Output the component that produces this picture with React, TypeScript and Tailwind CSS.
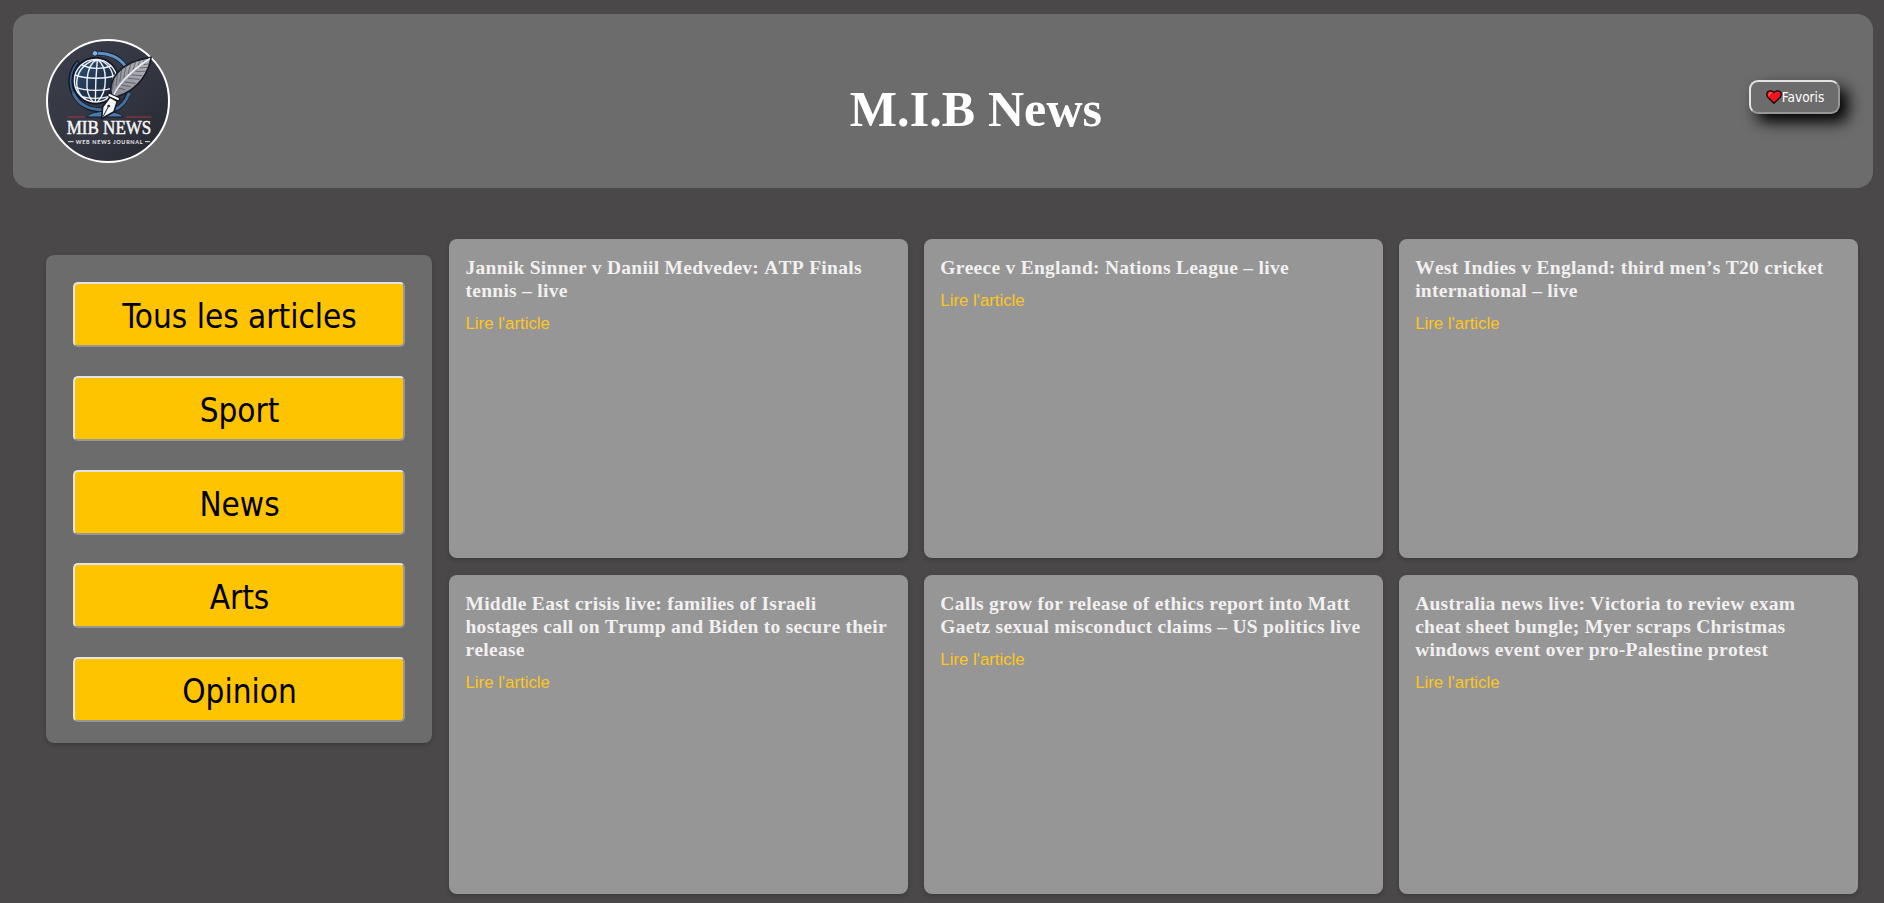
const categories = ["Tous les articles", "Sport", "News", "Arts", "Opinion"];

const articles = [
  "Jannik Sinner v Daniil Medvedev: ATP Finals tennis – live",
  "Greece v England: Nations League – live",
  "West Indies v England: third men’s T20 cricket international – live",
  "Middle East crisis live: families of Israeli hostages call on Trump and Biden to secure their release",
  "Calls grow for release of ethics report into Matt Gaetz sexual misconduct claims – US politics live",
  "Australia news live: Victoria to review exam cheat sheet bungle; Myer scraps Christmas windows event over pro-Palestine protest",
];

const bevel =
  "border-2 border-t-[#e3e3e3] border-l-[#e3e3e3] border-r-[#979797] border-b-[#979797]";

function Logo() {
  return (
    <svg viewBox="18 27 372 372" className="size-[124px] shrink-0">
      <defs>
        <linearGradient id="night" x1="0" y1="0" x2="1" y2="1">
          <stop offset="0" stopColor="#3c3f4b" />
          <stop offset="0.6" stopColor="#32343f" />
          <stop offset="1" stopColor="#24262f" />
        </linearGradient>
        <linearGradient id="ocean" x1="0" y1="0" x2="1" y2="1">
          <stop offset="0" stopColor="#345a80" />
          <stop offset="0.5" stopColor="#22354f" />
          <stop offset="1" stopColor="#1b2436" />
        </linearGradient>
        <linearGradient id="plume" x1="0" y1="1" x2="1" y2="0">
          <stop offset="0" stopColor="#85868f" />
          <stop offset="1" stopColor="#b9bac0" />
        </linearGradient>
      </defs>
      <circle cx="204" cy="213" r="183" fill="url(#night)" stroke="#fff" strokeWidth="6" />
      <g fill="none" strokeLinecap="round">
        <path d="M168 70C205 68 238 82 257 110M264 192C255 220 238 234 222 239M112 98A86 86 0 0 0 186 239" stroke="#141a29" strokeWidth="14" />
        <path d="M168 70C205 67 238 82 256 108" stroke="#5f93c8" strokeWidth="9" />
        <path d="M266 192C256 220 240 233 222 239M100 190C115 223 148 240 186 239" stroke="#42709f" strokeWidth="9" />
        <path d="M112 98A86 86 0 0 0 100 190" stroke="#37608c" strokeWidth="5" />
      </g>
      <circle cx="165" cy="70" r="8" fill="#83b4e2" stroke="#141a29" strokeWidth="2" />
      <path d="M142 261C148 247 170 248 184 244H210C224 249 242 248 248 261Z" fill="#4a7bae" stroke="#141a29" strokeWidth="3" />
      <circle cx="167" cy="152" r="67" fill="url(#ocean)" stroke="#12192a" strokeWidth="9" />
      <g fill="none" stroke="#eef2f7" strokeWidth="4.2">
        <circle cx="167" cy="152" r="64" />
        <path d="M172 88C168 130 166 180 166 216M172 88C136 105 130 190 160 216M172 88C204 110 204 184 172 216M172 88C110 99 88 176 137 208M172 88C232 104 232 184 197 208" />
        <path d="M125 104C148 118 190 118 213 108M105 135C142 148 196 148 229 135M107 172C140 184 192 184 226 172M126 200C148 207 184 207 206 200" />
      </g>
      <path d="M214 196C204 148 238 96 333 82C328 122 298 178 235 198L224 208Z" fill="url(#plume)" stroke="#191b27" strokeWidth="5" />
      <g fill="none" stroke="#4d4f5a" strokeWidth="2.2">
        <path d="M217 178L222 150M228 168L233 131M239 156L245 119M251 144L258 108M264 132L273 100M279 119L288 93M294 107L302 89M309 97L315 86" />
        <path d="M235 174L256 179M244 165L272 170M253 156L287 160M264 145L299 148M275 135L307 137M287 124L316 124M299 114L324 112M311 104L329 101" />
      </g>
      <path d="M218 204C228 170 270 124 330 85" fill="none" stroke="#f4f4f6" strokeWidth="4" />
      <path d="M185 266L188 230L210 201L232 214L222 245Z" fill="#f5f5f6" stroke="#181a25" strokeWidth="5" strokeLinejoin="round" />
      <path d="M207 194L236 208" stroke="#181a25" strokeWidth="12" strokeLinecap="round" />
      <path d="M208 195L234 207" stroke="#fff" strokeWidth="6" strokeLinecap="round" />
      <path d="M189 260L205 230" stroke="#1b1d28" strokeWidth="3" />
      <circle cx="206" cy="228" r="4" fill="#1b1d28" />
      <path d="M82 261H134M258 261H334" stroke="#a83243" strokeWidth="3" />
      <text x="80" y="313" textLength="254" lengthAdjust="spacingAndGlyphs" fontFamily="Liberation Serif, serif" fontSize="58" fill="#f7f7f7" stroke="#f7f7f7" strokeWidth="1.5">
        MIB NEWS
      </text>
      <path d="M84 335H101M315 335H330" stroke="#e9e9ec" strokeWidth="3" />
      <text x="107" y="341" textLength="201" fontFamily="Lato, sans-serif" fontWeight="700" fontSize="16.5" fill="#ececef">
        WEB NEWS JOURNAL
      </text>
    </svg>
  );
}

function Heart() {
  return (
    <svg viewBox="0 0 16 14" className="h-[14px] w-4 shrink-0">
      <path
        d="M8 13.2L1.8 7.2C.3 5.4.5 2.9 2.1 1.6C4 .2 6.7.7 8 2.7C9.3.7 12 .2 13.9 1.6C15.5 2.9 15.7 5.4 14.2 7.2Z"
        fill="#f0141e"
        stroke="#1a0304"
        strokeWidth="1.3"
        strokeLinejoin="round"
      />
      <path d="M3 5.2C3 3.6 4 2.8 5.2 2.9" fill="none" stroke="#ff7b80" strokeWidth="1.1" strokeLinecap="round" />
    </svg>
  );
}

export default function App() {
  return (
    <div className="h-[903px] overflow-hidden bg-[#4b4849] pt-[14px] pr-[11px] pl-[13px] font-['Liberation_Sans',sans-serif]">
      <header className="flex h-[174px] items-center justify-between rounded-2xl bg-[#6c6c6c] px-[33px]">
        <Logo />
        <h1 className="pt-[15px] pl-[33px] font-['Liberation_Serif',serif] text-[50px] leading-none font-bold tracking-[0.1px] text-white">
          M.I.B News
        </h1>
        <button
          className={`mb-[8px] flex h-[34px] w-[91px] items-center justify-center rounded-[9px] bg-[#6c6c6c] pl-px font-['DejaVu_Sans_Condensed','DejaVu_Sans',sans-serif] text-[13.5px] text-white shadow-[8px_8px_15px_#000] ${bevel}`}
        >
          <Heart />
          <span className="pt-px">Favoris</span>
        </button>
      </header>

      <main className="flex items-start pt-[51px] pr-[15px] pl-[33px]">
        <nav className="mt-4 flex h-[488px] w-[386px] shrink-0 flex-col gap-[28.8px] rounded-lg bg-[#6c6c6c] px-[27px] pt-[27px] shadow-[0_2px_5px_rgba(0,0,0,0.2)]">
          {categories.map((name) => (
            <button
              key={name}
              className={`h-[65px] w-full shrink-0 rounded-[5px] bg-[#ffc400] pt-1 pl-px font-['DejaVu_Sans_Condensed','DejaVu_Sans',sans-serif] text-[33px] leading-none text-black ${bevel}`}
            >
              {name}
            </button>
          ))}
        </nav>

        <section className="ml-[17px] grid flex-1 auto-rows-[319px] grid-cols-3 gap-x-[15.5px] gap-y-[17px]">
          {articles.map((title) => (
            <article
              key={title}
              className="rounded-lg bg-[#969696] pt-[17px] pr-[18px] pl-[16.5px] shadow-[0_2px_5px_rgba(0,0,0,0.2)]"
            >
              <h3 className="font-['Liberation_Serif',serif] text-[19.5px] leading-[23px] font-bold tracking-[0.27px] text-[#f2f0f0] [font-kerning:none]">
                {title}
              </h3>
              <a className="mt-[12px] block text-[16.8px] leading-[19px] text-[#ffc61a]">Lire l'article</a>
            </article>
          ))}
        </section>
      </main>
    </div>
  );
}
